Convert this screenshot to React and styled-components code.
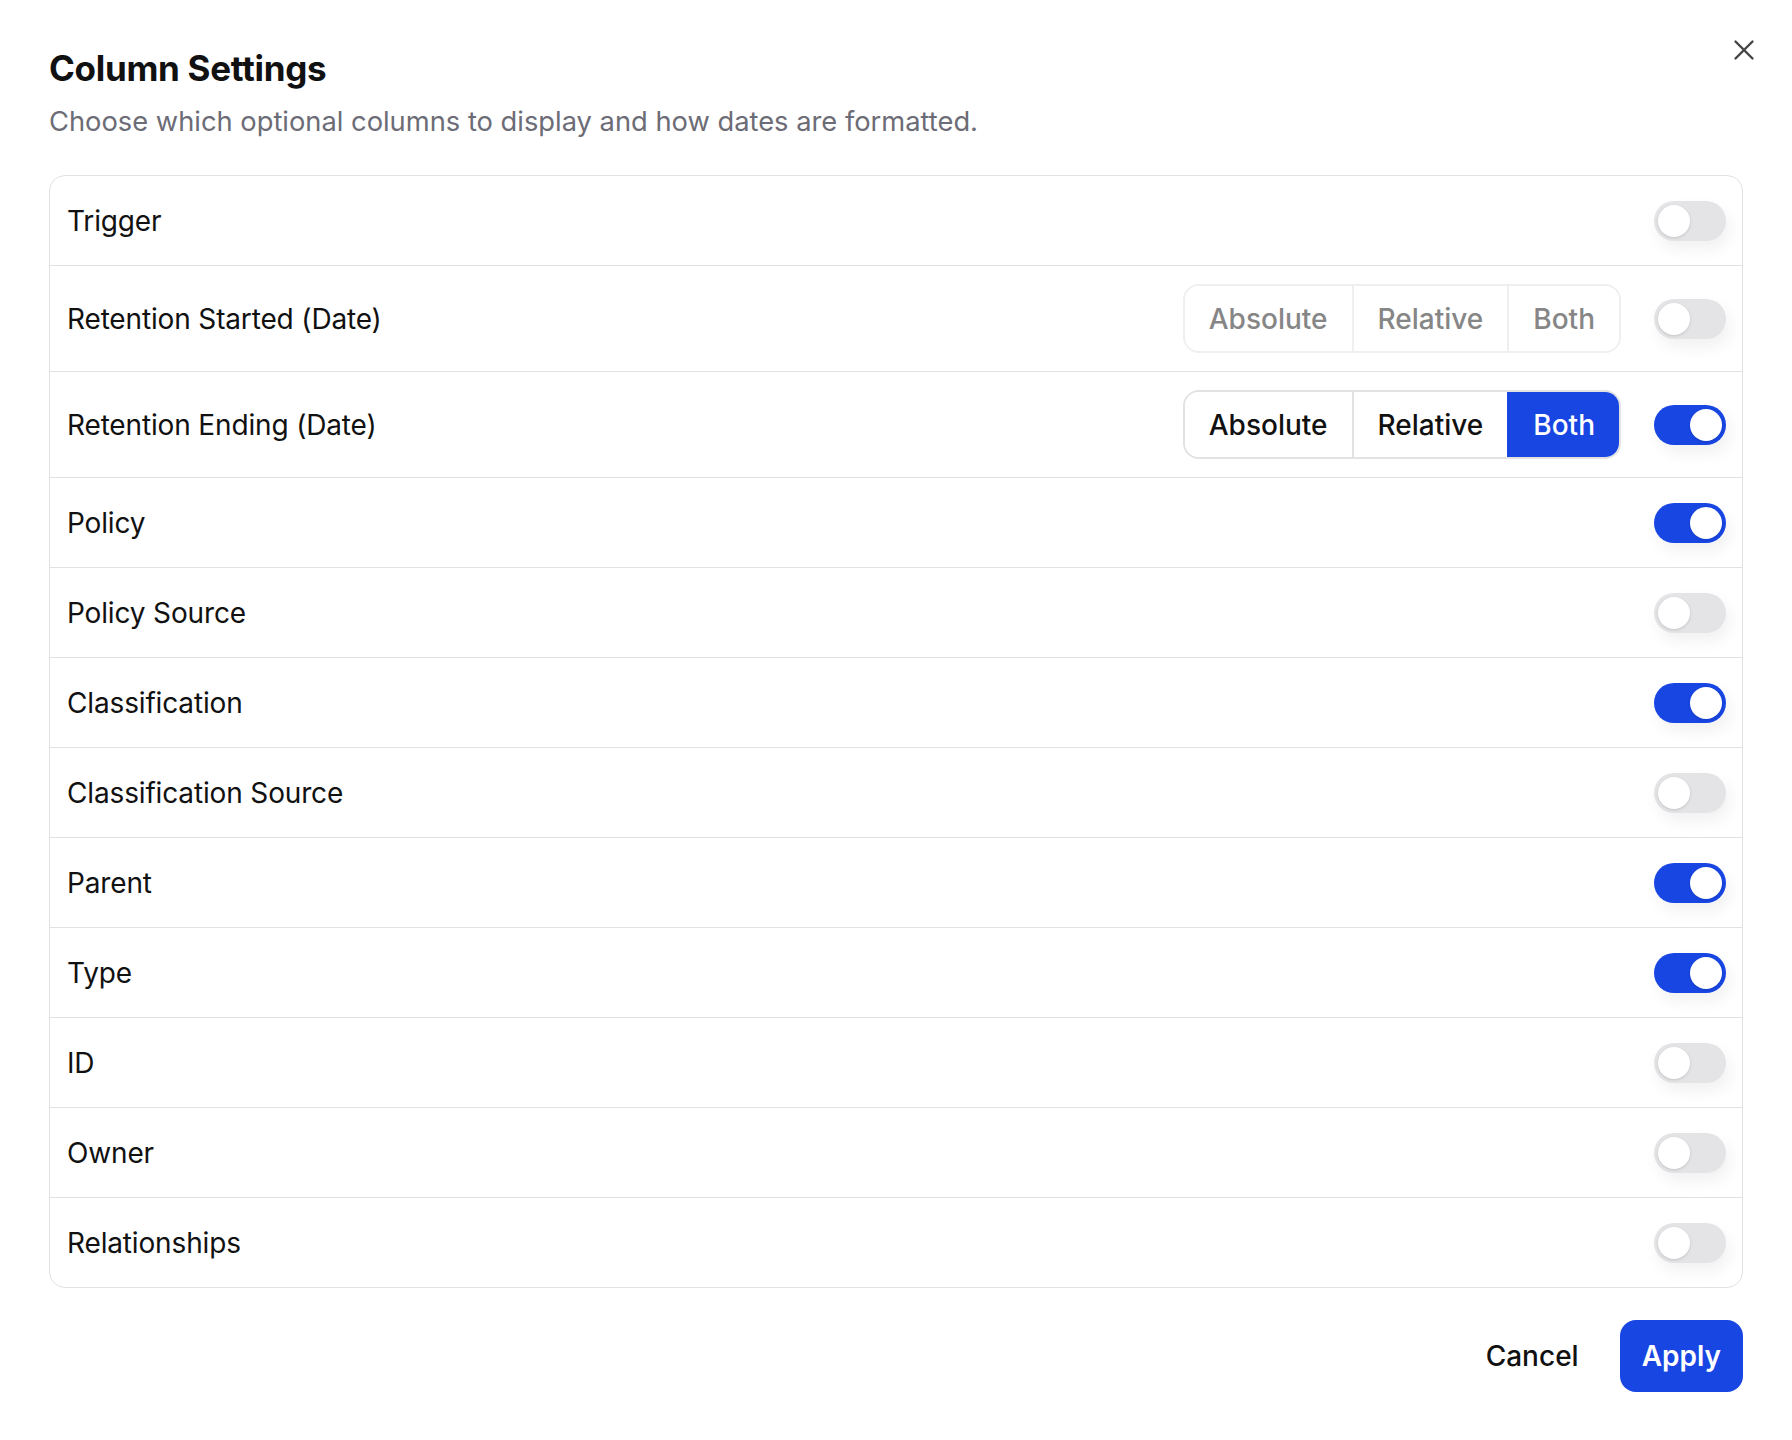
import React from 'react';
import styled, { createGlobalStyle } from 'styled-components';

const GlobalStyle = createGlobalStyle`
  html, body {
    margin: 0;
    padding: 0;
    background: #ffffff;
  }
  body {
    font-family: Inter, 'Noto Sans', 'Liberation Sans', sans-serif;
    color: #111111;
    -webkit-font-smoothing: antialiased;
  }
`;

const BLUE = '#1846e3';

const Dialog = styled.div`
  position: relative;
  width: 1792px;
  min-height: 1440px;
  box-sizing: border-box;
  padding: 46px 49px 48px 49px;
  display: flex;
  flex-flow: column nowrap;
`;

const CloseButton = styled.button`
  position: absolute;
  top: 38px;
  right: 36px;
  width: 24px;
  height: 24px;
  padding: 0;
  border: none;
  background: none;
  display: flex;
  align-items: center;
  justify-content: center;
  color: #454545;
  cursor: pointer;
`;

const Title = styled.h2`
  margin: 0;
  font-size: 35px;
  line-height: 44px;
  font-weight: 700;
  letter-spacing: -0.3px;
  color: #111111;
`;

const Subtitle = styled.p`
  margin: 15px 0 0 0;
  font-size: 27.3px;
  line-height: 34px;
  font-weight: 400;
  color: #6c6c76;
`;

const Table = styled.div`
  margin-top: 36px;
  border: 1px solid #e2e2e2;
  border-radius: 16px;
  overflow: hidden;
  display: flex;
  flex-flow: column nowrap;
`;

const Row = styled.div`
  min-height: 90px;
  box-sizing: border-box;
  padding: 18px 16px 18px 17px;
  display: flex;
  flex-flow: row nowrap;
  align-items: center;
  justify-content: space-between;
  border-bottom: 1px solid #e2e2e2;

  &:last-child {
    border-bottom: none;
    min-height: 89px;
  }
`;

const Label = styled.span`
  font-size: 28px;
  font-weight: 400;
  letter-spacing: -0.15px;
  color: #111111;
`;

const Controls = styled.div`
  display: flex;
  flex-flow: row nowrap;
  align-items: center;
  gap: 33px;
`;

const Segmented = styled.div`
  height: 69px;
  box-sizing: border-box;
  display: flex;
  flex-flow: row nowrap;
  border: 2px solid ${({ $disabled }) => ($disabled ? '#efefef' : '#e2e2e2')};
  border-radius: 16px;
  overflow: hidden;
`;

const Segment = styled.button`
  height: 100%;
  padding: 0 24px;
  border: none;
  border-left: 2px solid ${({ $disabled }) => ($disabled ? '#efefef' : '#e2e2e2')};
  background: ${({ $active }) => ($active ? BLUE : '#ffffff')};
  color: ${({ $active, $disabled }) => ($active ? '#ffffff' : $disabled ? '#868686' : '#111111')};
  font-family: inherit;
  font-size: 28px;
  font-weight: 500;
  cursor: pointer;

  &:first-child {
    border-left: none;
  }
  ${({ $active }) => $active && `border-left-color: ${BLUE};`}
`;

const Switch = styled.div`
  position: relative;
  width: 72px;
  height: 40px;
  flex: none;
  border-radius: 20px;
  background: ${({ $on }) => ($on ? BLUE : '#e4e4e7')};
  box-shadow: 4px 8px 16px rgba(0, 0, 0, 0.06);
  cursor: pointer;
`;

const Knob = styled.span`
  position: absolute;
  top: 4px;
  left: ${({ $on }) => ($on ? '36px' : '4px')};
  width: 32px;
  height: 32px;
  border-radius: 50%;
  background: #ffffff;
  box-shadow: 0 1px 3px rgba(0, 0, 0, 0.15);
`;

const Footer = styled.div`
  margin-top: 32px;
  display: flex;
  flex-flow: row nowrap;
  justify-content: flex-end;
  align-items: center;
  gap: 21px;
`;

const Button = styled.button`
  height: 72px;
  padding: 0 ${({ $primary }) => ($primary ? '22px' : '20px')};
  border: none;
  border-radius: 16px;
  background: ${({ $primary }) => ($primary ? BLUE : 'transparent')};
  color: ${({ $primary }) => ($primary ? '#ffffff' : '#111111')};
  font-family: inherit;
  font-size: 28px;
  font-weight: ${({ $primary }) => ($primary ? 600 : 500)};
  cursor: pointer;
`;

const columns = [
  { label: 'Trigger', on: false },
  { label: 'Retention Started (Date)', on: false, format: null },
  { label: 'Retention Ending (Date)', on: true, format: 'Both' },
  { label: 'Policy', on: true },
  { label: 'Policy Source', on: false },
  { label: 'Classification', on: true },
  { label: 'Classification Source', on: false },
  { label: 'Parent', on: true },
  { label: 'Type', on: true },
  { label: 'ID', on: false },
  { label: 'Owner', on: false },
  { label: 'Relationships', on: false },
];

const formats = ['Absolute', 'Relative', 'Both'];

const Toggle = ({ on }) => (
  <Switch $on={on}>
    <Knob $on={on} />
  </Switch>
);

const App = () => {
  return (
    <>
      <GlobalStyle />
      <Dialog>
        <CloseButton aria-label="Close">
          <svg width="22" height="22" viewBox="0 0 22 22" fill="none">
            <path d="M2.5 2.5 L19.5 19.5 M19.5 2.5 L2.5 19.5" stroke="currentColor" strokeWidth="2.4" strokeLinecap="round" />
          </svg>
        </CloseButton>
        <Title>Column Settings</Title>
        <Subtitle>Choose which optional columns to display and how dates are formatted.</Subtitle>

        <Table>
          {columns.map((col) => (
            <Row key={col.label}>
              <Label>{col.label}</Label>
              <Controls>
                {'format' in col && (
                  <Segmented $disabled={!col.on}>
                    {formats.map((f) => (
                      <Segment key={f} $active={col.on && col.format === f} $disabled={!col.on}>
                        {f}
                      </Segment>
                    ))}
                  </Segmented>
                )}
                <Toggle on={col.on} />
              </Controls>
            </Row>
          ))}
        </Table>

        <Footer>
          <Button>Cancel</Button>
          <Button $primary>Apply</Button>
        </Footer>
      </Dialog>
    </>
  );
};

export default App;
